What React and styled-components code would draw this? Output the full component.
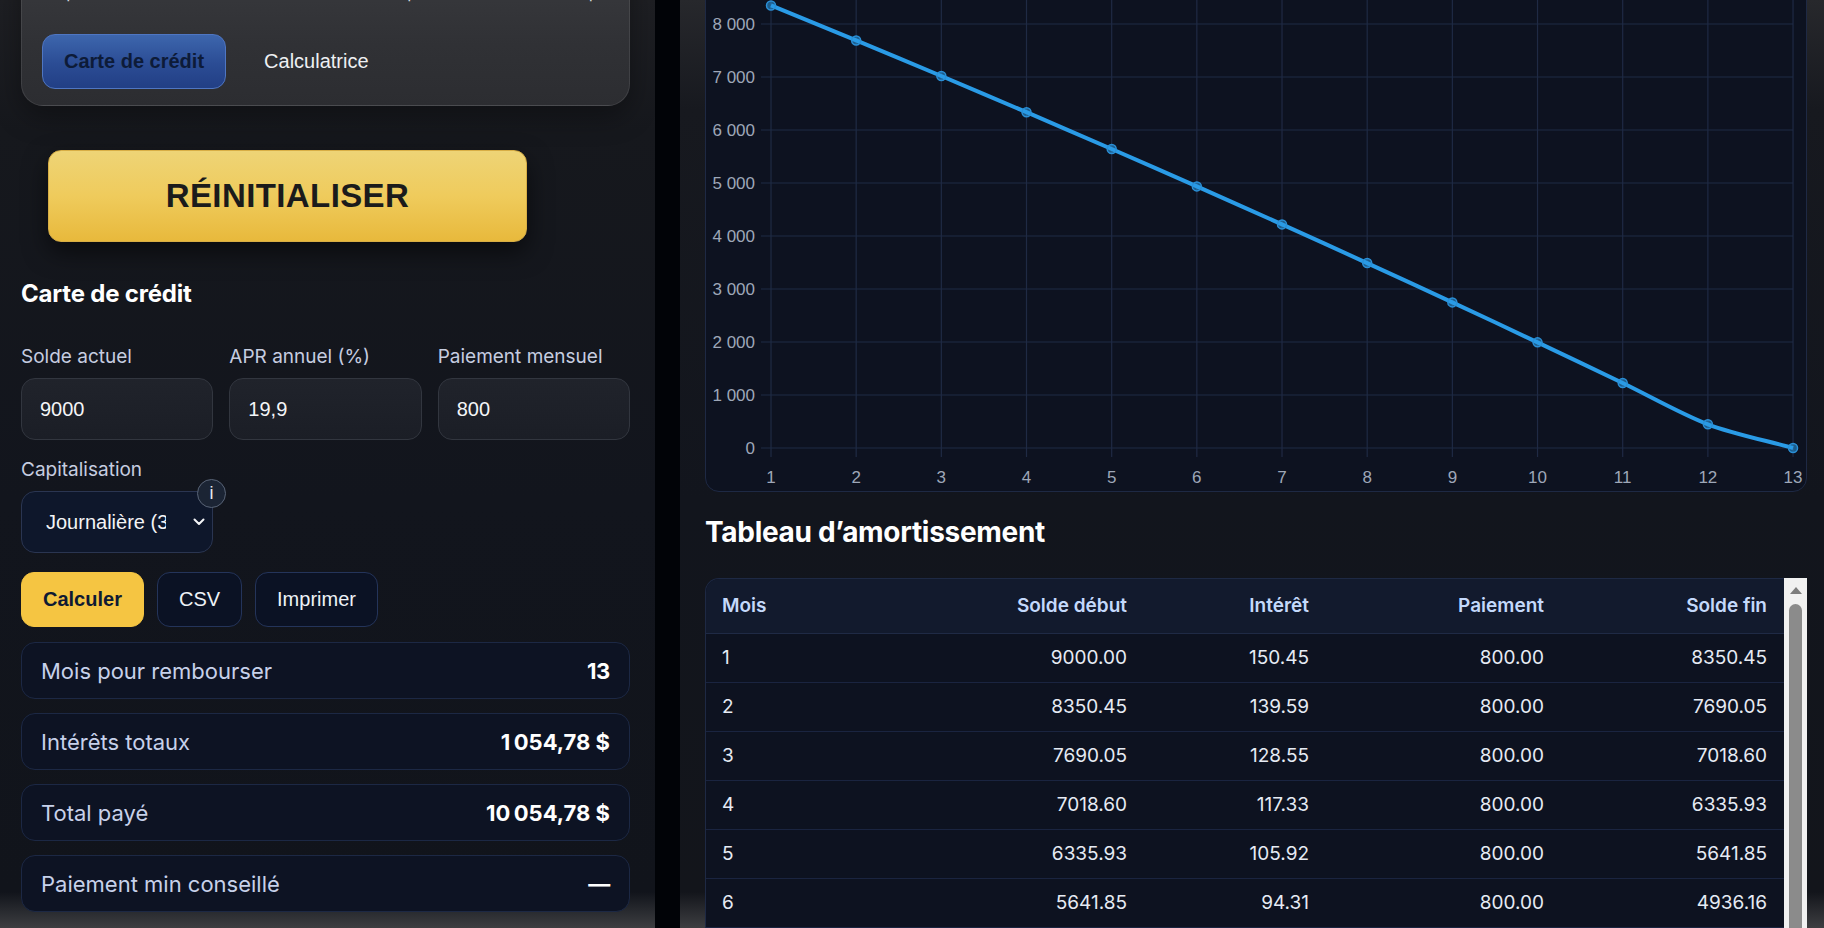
import React from "react";
import styled, { createGlobalStyle } from "styled-components";

const GlobalStyle = createGlobalStyle`
  html, body { margin: 0; padding: 0; }
  body {
    width: 1824px;
    height: 928px;
    overflow: hidden;
    background: #010307;
    font-family: Inter, "Noto Sans", "Liberation Sans", sans-serif;
    color: #f1f5f9;
  }
  input, select, button { font-family: "Liberation Sans", Arial, sans-serif; }
  * { box-sizing: border-box; }
`;

const Page = styled.div`
  display: grid;
  grid-template-columns: 655px 1fr;
  column-gap: 25px;
  height: 928px;
  overflow: hidden;
`;

const Panel = styled.section`
  display: flex;
  flex-direction: column;
  height: 928px;
  overflow: hidden;
  & > * { flex-shrink: 0; }
`;

const LeftPanel = styled(Panel)`
  padding: 0 25px 0 21px;
  background: linear-gradient(
    180deg,
    #1e1f23 0px,
    #16181d 130px,
    #12151d 500px,
    #11141b 892px,
    #3d3e41 928px
  );
`;

const RightPanel = styled(Panel)`
  padding: 0 17px 0 25px;
  background: linear-gradient(
    180deg,
    #27282c 0px,
    #17191f 110px,
    #12151d 500px,
    #13151b 892px,
    #3d3e41 928px
  );
`;

const ModeCard = styled.div`
  margin-top: -45px;
  padding: 20px 21px 16px 20px;
  border-radius: 22px;
  border: 1px solid rgba(255, 255, 255, 0.09);
  background: linear-gradient(180deg, #3a3b3f 0%, #303135 60%, #2c2d31 100%);
  box-shadow: 0 10px 28px rgba(0, 0, 0, 0.35);
  overflow: hidden;
`;

const Intro = styled.p`
  margin: 0 0 26px;
  font-size: 17px;
  line-height: 32px;
  color: #d4d6dc;
  white-space: nowrap;
`;

const Tabs = styled.div`
  display: flex;
  align-items: center;
  gap: 16px;
`;

const Tab = styled.button`
  height: 55px;
  padding: 0 21px;
  border-radius: 13px;
  font-size: 20px;
  cursor: pointer;
  border: 1px solid ${(p) => (p.$active ? "#4f76c2" : "transparent")};
  background: ${(p) =>
    p.$active ? "linear-gradient(180deg, #3d66ad 0%, #2b4c94 55%, #223f85 100%)" : "transparent"};
  color: ${(p) => (p.$active ? "#0d1b38" : "#eef0f3")};
  font-weight: ${(p) => (p.$active ? 700 : 400)};
`;

const ResetButton = styled.button`
  margin: 44px 0 0 27px;
  width: 479px;
  height: 92px;
  border-radius: 13px;
  border: 1px solid #d8ae45;
  background: linear-gradient(180deg, #eed476 0%, #efcb5c 50%, #e8b93c 100%);
  box-shadow: 0 10px 24px rgba(0, 0, 0, 0.55);
  font-weight: 700;
  font-size: 33px;
  letter-spacing: 0.4px;
  color: #1b1b1b;
  cursor: pointer;
`;

const SectionTitle = styled.h2`
  margin: 37px 0 0;
  font-size: 24px;
  line-height: 30px;
  font-weight: 700;
  color: #ffffff;
  letter-spacing: -0.2px;
`;

const FieldGrid = styled.div`
  margin-top: 36px;
  display: grid;
  grid-template-columns: repeat(3, 1fr);
  column-gap: 16px;
`;

const Field = styled.label`
  display: flex;
  flex-direction: column;
  gap: 9px;
  margin-top: ${(p) => p.$mt || 0}px;
`;

const Label = styled.span`
  font-size: 19px;
  line-height: 24px;
  color: #c6cde0;
`;

const Input = styled.input`
  height: 62px;
  width: 100%;
  padding: 0 18px;
  border-radius: 14px;
  border: 1px solid #32363f;
  background: linear-gradient(180deg, #20232b 0%, #1b1e26 100%);
  color: #f4f5f7;
  font-size: 20px;
  outline: none;
`;

const SelectWrap = styled.div`
  position: relative;
  width: 192px;
`;

const Select = styled.select`
  appearance: none;
  -webkit-appearance: none;
  width: 100%;
  height: 62px;
  padding: 0 46px 0 24px;
  border-radius: 14px;
  border: 1px solid #2a3551;
  background: #0e172b;
  color: #f3f4f6;
  font-size: 20px;
  outline: none;
`;

const Chevron = styled.svg`
  position: absolute;
  right: 7px;
  top: 25px;
  width: 14px;
  height: 12px;
  pointer-events: none;
`;

const InfoBadge = styled.span`
  position: absolute;
  top: -12px;
  right: -13px;
  width: 29px;
  height: 29px;
  border-radius: 50%;
  border: 1.5px solid #596477;
  background: #1b2434;
  color: #e8eaee;
  font-family: "Liberation Sans", Arial, sans-serif;
  font-size: 18px;
  line-height: 26px;
  text-align: center;
`;

const Actions = styled.div`
  display: flex;
  gap: 13px;
  margin-top: 19px;
`;

const ActionButton = styled.button`
  height: 55px;
  padding: 0 21px;
  border-radius: 13px;
  font-size: 20px;
  cursor: pointer;
  border: 1px solid ${(p) => (p.$primary ? "#f5c542" : "#24345a")};
  background: ${(p) => (p.$primary ? "#f5c542" : "#0b1224")};
  color: ${(p) => (p.$primary ? "#0e1a33" : "#eef2f7")};
  font-weight: ${(p) => (p.$primary ? 700 : 400)};
`;

const Results = styled.div`
  display: flex;
  flex-direction: column;
  gap: 14px;
  margin-top: 15px;
`;

const ResultRow = styled.div`
  height: 57px;
  display: flex;
  align-items: center;
  justify-content: space-between;
  padding: 0 19px;
  border-radius: 14px;
  border: 1px solid #1c2844;
  background: #0d1323;
`;

const ResultLabel = styled.span`
  font-size: 22px;
  color: #c7d1ea;
`;

const ResultValue = styled.span`
  font-size: 22px;
  font-weight: 700;
  color: #ffffff;
  letter-spacing: -0.3px;
`;

const ChartCard = styled.div`
  margin-top: -60px;
  height: 552px;
  border-radius: 14px;
  border: 1px solid #1e2944;
  background: #0d1220;
  overflow: hidden;
`;

const ChartSvg = styled.svg`
  display: block;
  width: 1100px;
  height: 550px;
`;

const TableTitle = styled.h2`
  margin: 23px 0 0;
  font-size: 28px;
  line-height: 34px;
  font-weight: 700;
  color: #ffffff;
  letter-spacing: -0.3px;
`;

const TableFrame = styled.div`
  margin-top: 29px;
  display: flex;
  align-items: stretch;
  height: 560px;
`;

const TableBox = styled.div`
  flex: 1;
  overflow: hidden;
  border: 1px solid #1e2944;
  border-right: none;
  border-radius: 14px 0 0 0;
  background: #0d1220;
`;

const ScrollRail = styled.div`
  width: 23px;
  background: #f1f1f1;
  display: flex;
  flex-direction: column;
  align-items: center;
  padding-top: 9px;
`;

const ScrollArrow = styled.div`
  width: 0;
  height: 0;
  border-left: 6px solid transparent;
  border-right: 6px solid transparent;
  border-bottom: 7px solid #7d7d7d;
`;

const ScrollThumb = styled.div`
  margin-top: 10px;
  width: 13px;
  height: 480px;
  border-radius: 7px;
  background: #8b8b8b;
`;

const Table = styled.table`
  width: 100%;
  border-collapse: collapse;
  table-layout: fixed;
  font-size: 19px;
`;

const Th = styled.th`
  height: 54px;
  padding: 0 17px 0 16px;
  background: #121a2d;
  color: #c4d9fb;
  font-weight: 600;
  text-align: ${(p) => (p.$left ? "left" : "right")};
  border-bottom: 1px solid #1f2a45;
`;

const Td = styled.td`
  height: 49px;
  padding: 0 17px 0 16px;
  color: #e6ebf4;
  text-align: ${(p) => (p.$left ? "left" : "right")};
  border-bottom: 1px solid #1a2440;
`;

const rows = [
  [1, "9000.00", "150.45", "800.00", "8350.45"],
  [2, "8350.45", "139.59", "800.00", "7690.05"],
  [3, "7690.05", "128.55", "800.00", "7018.60"],
  [4, "7018.60", "117.33", "800.00", "6335.93"],
  [5, "6335.93", "105.92", "800.00", "5641.85"],
  [6, "5641.85", "94.31", "800.00", "4936.16"],
  [7, "4936.16", "82.52", "800.00", "4218.68"],
  [8, "4218.68", "70.52", "800.00", "3489.20"],
  [9, "3489.20", "58.33", "800.00", "2747.53"],
  [10, "2747.53", "45.93", "800.00", "1993.46"],
  [11, "1993.46", "33.32", "800.00", "1226.78"],
  [12, "1226.78", "20.51", "800.00", "447.29"],
  [13, "447.29", "7.48", "454.77", "0.00"],
];

const balances = rows.map((r) => parseFloat(r[4]));

const X0 = 65;
const DX = 85.17;
const Y0 = 507;
const KY = 0.053;
const xOf = (m) => X0 + (m - 1) * DX;
const yOf = (v) => Y0 - v * KY;

function buildPath(pts, t) {
  const cps = pts.map((cur, i) => {
    const prev = pts[i - 1] || cur;
    const next = pts[i + 1] || cur;
    const d01 = Math.hypot(cur.x - prev.x, cur.y - prev.y);
    const d12 = Math.hypot(next.x - cur.x, next.y - cur.y);
    const s01 = d01 + d12 ? d01 / (d01 + d12) : 0;
    const s12 = d01 + d12 ? d12 / (d01 + d12) : 0;
    const fa = t * s01;
    const fb = t * s12;
    return {
      px: cur.x - fa * (next.x - prev.x),
      py: cur.y - fa * (next.y - prev.y),
      nx: cur.x + fb * (next.x - prev.x),
      ny: cur.y + fb * (next.y - prev.y),
    };
  });
  let d = `M${pts[0].x},${pts[0].y}`;
  for (let i = 1; i < pts.length; i++) {
    d += ` C${cps[i - 1].nx.toFixed(2)},${cps[i - 1].ny.toFixed(2)} ${cps[i].px.toFixed(2)},${cps[i].py.toFixed(2)} ${pts[i].x.toFixed(2)},${pts[i].y.toFixed(2)}`;
  }
  return d;
}

function BalanceChart() {
  const pts = balances.map((v, i) => ({ x: xOf(i + 1), y: yOf(v) }));
  const yTicks = [0, 1000, 2000, 3000, 4000, 5000, 6000, 7000, 8000, 9000];
  const months = Array.from({ length: 13 }, (_, i) => i + 1);
  const fmt = (v) => (v === 0 ? "0" : `${v / 1000} 000`);
  return (
    <ChartSvg viewBox="0 0 1100 550">
      <g stroke="#1f2a44" strokeWidth="1.2">
        {yTicks.map((v) => (
          <line key={v} x1={55} x2={xOf(13)} y1={yOf(v)} y2={yOf(v)} />
        ))}
        {months.map((m) => (
          <line key={m} x1={xOf(m)} x2={xOf(m)} y1={0} y2={516} />
        ))}
      </g>
      <g fill="#9ea7b8" fontFamily="'Liberation Sans', Arial, sans-serif" fontSize="17">
        {yTicks.map((v) => (
          <text key={v} x={49} y={yOf(v) + 6} textAnchor="end">
            {fmt(v)}
          </text>
        ))}
        {months.map((m) => (
          <text key={m} x={xOf(m)} y={542} textAnchor="middle">
            {m}
          </text>
        ))}
      </g>
      <path d={buildPath(pts, 0.3)} fill="none" stroke="#2a9be6" strokeWidth="4" strokeLinejoin="round" />
      {pts.map((p, i) => (
        <circle
          key={i}
          cx={p.x}
          cy={p.y}
          r={4.5}
          fill="#2a9be6"
          fillOpacity="0.55"
          stroke="#2a8fd6"
          strokeWidth="1.5"
        />
      ))}
    </ChartSvg>
  );
}

export default function App() {
  return (
    <>
      <GlobalStyle />
      <Page>
        <LeftPanel>
          <ModeCard>
            <Intro>Le paiement mensuel réduit le solde de votre prêt tout au cours des périodes.</Intro>
            <Tabs>
              <Tab $active>Carte de crédit</Tab>
              <Tab>Calculatrice</Tab>
            </Tabs>
          </ModeCard>

          <ResetButton>RÉINITIALISER</ResetButton>

          <SectionTitle>Carte de crédit</SectionTitle>

          <FieldGrid>
            <Field>
              <Label>Solde actuel</Label>
              <Input value="9000" readOnly />
            </Field>
            <Field>
              <Label>APR annuel (%)</Label>
              <Input value="19,9" readOnly />
            </Field>
            <Field>
              <Label>Paiement mensuel</Label>
              <Input value="800" readOnly />
            </Field>
          </FieldGrid>

          <Field $mt={18}>
            <Label>Capitalisation</Label>
            <SelectWrap>
              <Select defaultValue="daily">
                <option value="daily">Journalière (365 jours)</option>
                <option value="monthly">Mensuelle (12)</option>
              </Select>
              <Chevron viewBox="0 0 14 12">
                <path d="M2.5 3.5 L7 8 L11.5 3.5" fill="none" stroke="#f3f4f6" strokeWidth="2" strokeLinecap="round" strokeLinejoin="round" />
              </Chevron>
              <InfoBadge>i</InfoBadge>
            </SelectWrap>
          </Field>

          <Actions>
            <ActionButton $primary>Calculer</ActionButton>
            <ActionButton>CSV</ActionButton>
            <ActionButton>Imprimer</ActionButton>
          </Actions>

          <Results>
            <ResultRow>
              <ResultLabel>Mois pour rembourser</ResultLabel>
              <ResultValue>13</ResultValue>
            </ResultRow>
            <ResultRow>
              <ResultLabel>Intérêts totaux</ResultLabel>
              <ResultValue>{"1\u202f054,78\u00a0$"}</ResultValue>
            </ResultRow>
            <ResultRow>
              <ResultLabel>Total payé</ResultLabel>
              <ResultValue>{"10\u202f054,78\u00a0$"}</ResultValue>
            </ResultRow>
            <ResultRow>
              <ResultLabel>Paiement min conseillé</ResultLabel>
              <ResultValue>—</ResultValue>
            </ResultRow>
          </Results>
        </LeftPanel>

        <RightPanel>
          <ChartCard>
            <BalanceChart />
          </ChartCard>

          <TableTitle>Tableau d’amortissement</TableTitle>

          <TableFrame>
            <TableBox>
              <Table>
                <colgroup>
                  <col style={{ width: "200px" }} />
                  <col style={{ width: "238px" }} />
                  <col style={{ width: "182px" }} />
                  <col style={{ width: "235px" }} />
                  <col />
                </colgroup>
                <thead>
                  <tr>
                    <Th $left>Mois</Th>
                    <Th>Solde début</Th>
                    <Th>Intérêt</Th>
                    <Th>Paiement</Th>
                    <Th>Solde fin</Th>
                  </tr>
                </thead>
                <tbody>
                  {rows.map((r) => (
                    <tr key={r[0]}>
                      <Td $left>{r[0]}</Td>
                      <Td>{r[1]}</Td>
                      <Td>{r[2]}</Td>
                      <Td>{r[3]}</Td>
                      <Td>{r[4]}</Td>
                    </tr>
                  ))}
                </tbody>
              </Table>
            </TableBox>
            <ScrollRail>
              <ScrollArrow />
              <ScrollThumb />
            </ScrollRail>
          </TableFrame>
        </RightPanel>
      </Page>
    </>
  );
}
